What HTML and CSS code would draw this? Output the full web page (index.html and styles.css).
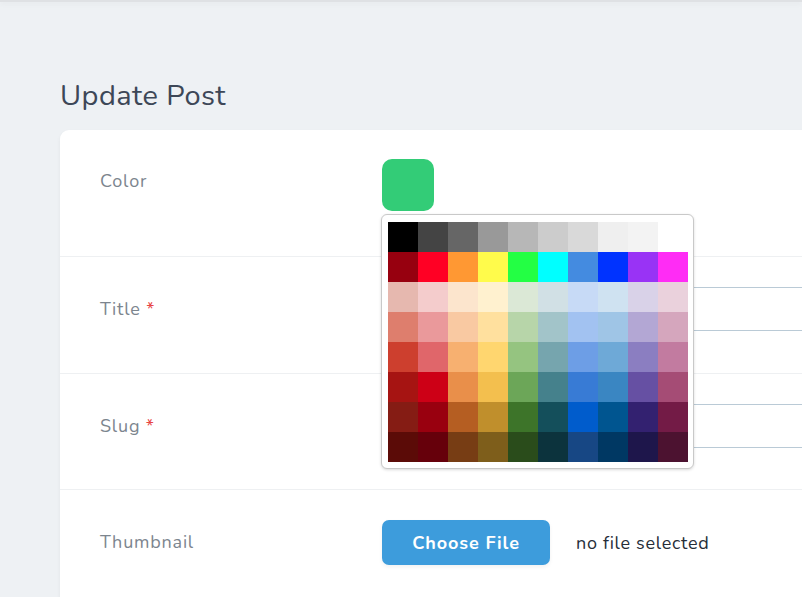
FILE: index.html
```html
<!DOCTYPE html>
<html>
<head>
<meta charset="utf-8">
<title>Update Post</title>
<link rel="stylesheet" href="styles.css">
</head>
<body>
<div class="topbar"></div>
<main class="page">
  <h1 class="heading">Update Post</h1>
  <section class="card">
    <div class="row row-color">
      <div class="label">Color</div>
      <div class="field">
        <div class="swatch"></div>
        <div class="palette">
          <div class="cell" style="background:#000000"></div>
          <div class="cell" style="background:#444444"></div>
          <div class="cell" style="background:#666666"></div>
          <div class="cell" style="background:#999999"></div>
          <div class="cell" style="background:#b7b7b7"></div>
          <div class="cell" style="background:#cccccc"></div>
          <div class="cell" style="background:#d9d9d9"></div>
          <div class="cell" style="background:#efefef"></div>
          <div class="cell" style="background:#f3f3f3"></div>
          <div class="cell" style="background:#ffffff"></div>

          <div class="cell" style="background:#97000f"></div>
          <div class="cell" style="background:#ff0024"></div>
          <div class="cell" style="background:#ff9833"></div>
          <div class="cell" style="background:#fffb4b"></div>
          <div class="cell" style="background:#23ff44"></div>
          <div class="cell" style="background:#00ffff"></div>
          <div class="cell" style="background:#448be0"></div>
          <div class="cell" style="background:#0033ff"></div>
          <div class="cell" style="background:#9933f5"></div>
          <div class="cell" style="background:#ff2cf5"></div>

          <div class="cell" style="background:#e6b8af"></div>
          <div class="cell" style="background:#f4cccc"></div>
          <div class="cell" style="background:#fce5cd"></div>
          <div class="cell" style="background:#fff1cf"></div>
          <div class="cell" style="background:#dbe8d6"></div>
          <div class="cell" style="background:#d1e0e5"></div>
          <div class="cell" style="background:#c7daf6"></div>
          <div class="cell" style="background:#cfe2f1"></div>
          <div class="cell" style="background:#d9d2e8"></div>
          <div class="cell" style="background:#ead1dc"></div>

          <div class="cell" style="background:#de7e6d"></div>
          <div class="cell" style="background:#ea999b"></div>
          <div class="cell" style="background:#f9c9a2"></div>
          <div class="cell" style="background:#ffe09e"></div>
          <div class="cell" style="background:#b7d5a9"></div>
          <div class="cell" style="background:#a2c4c9"></div>
          <div class="cell" style="background:#a2c2f1"></div>
          <div class="cell" style="background:#9fc5e6"></div>
          <div class="cell" style="background:#b3a7d4"></div>
          <div class="cell" style="background:#d5a6bd"></div>

          <div class="cell" style="background:#cd3f2e"></div>
          <div class="cell" style="background:#e0666a"></div>
          <div class="cell" style="background:#f7b070"></div>
          <div class="cell" style="background:#ffd66f"></div>
          <div class="cell" style="background:#95c480"></div>
          <div class="cell" style="background:#76a5ae"></div>
          <div class="cell" style="background:#6d9ee6"></div>
          <div class="cell" style="background:#6ea9d7"></div>
          <div class="cell" style="background:#8b7ec1"></div>
          <div class="cell" style="background:#c27ba0"></div>

          <div class="cell" style="background:#a61412"></div>
          <div class="cell" style="background:#cd0016"></div>
          <div class="cell" style="background:#e98f4a"></div>
          <div class="cell" style="background:#f3bf4e"></div>
          <div class="cell" style="background:#6ca658"></div>
          <div class="cell" style="background:#45818c"></div>
          <div class="cell" style="background:#387bd5"></div>
          <div class="cell" style="background:#3a86c2"></div>
          <div class="cell" style="background:#6650a3"></div>
          <div class="cell" style="background:#a54c75"></div>

          <div class="cell" style="background:#851c14"></div>
          <div class="cell" style="background:#99000f"></div>
          <div class="cell" style="background:#b55e22"></div>
          <div class="cell" style="background:#c08f2c"></div>
          <div class="cell" style="background:#3d7429"></div>
          <div class="cell" style="background:#144f5b"></div>
          <div class="cell" style="background:#005ccc"></div>
          <div class="cell" style="background:#005590"></div>
          <div class="cell" style="background:#332170"></div>
          <div class="cell" style="background:#731b46"></div>

          <div class="cell" style="background:#5b0b07"></div>
          <div class="cell" style="background:#66000b"></div>
          <div class="cell" style="background:#773d14"></div>
          <div class="cell" style="background:#7e5e1b"></div>
          <div class="cell" style="background:#2a4c1b"></div>
          <div class="cell" style="background:#0c333d"></div>
          <div class="cell" style="background:#174784"></div>
          <div class="cell" style="background:#003863"></div>
          <div class="cell" style="background:#1e164b"></div>
          <div class="cell" style="background:#4c1230"></div>
        </div>
      </div>
    </div>
    <div class="row row-title">
      <div class="label">Title <span class="req">*</span></div>
      <div class="field">
        <div class="input"></div>
      </div>
    </div>
    <div class="row row-slug">
      <div class="label">Slug <span class="req">*</span></div>
      <div class="field">
        <div class="input"></div>
      </div>
    </div>
    <div class="row row-thumb">
      <div class="label">Thumbnail</div>
      <div class="field file-field">
        <button class="btn">Choose File</button>
        <span class="file-name">no file selected</span>
      </div>
    </div>
  </section>
</main>
</body>
</html>
```

FILE: styles.css
```css
html, body {
  margin: 0;
  padding: 0;
}

body {
  background: #eef1f4;
  font-family: "Nunito", "Noto Sans", "Open Sans", sans-serif;
  color: #3c4655;
  width: 802px;
  height: 597px;
  overflow: hidden;
}

.topbar {
  height: 2px;
  background: #dfe1e4;
  box-shadow: 0 2px 5px rgba(0, 0, 0, 0.06);
}

.page {
  padding-left: 60px;
}

.heading {
  margin: 0;
  padding-top: 76px;
  height: 36px;
  margin-bottom: 16px;
  font-size: 29px;
  line-height: 36px;
  font-weight: 400;
  letter-spacing: 0.45px;
  color: #3d4757;
}

.card {
  background: #ffffff;
  border-radius: 9px;
  width: 820px;
  height: 600px;
  box-shadow: 0 2px 4px rgba(0, 0, 0, 0.05);
}

.row {
  display: flex;
  align-items: flex-start;
  border-bottom: 1px solid #eef0f2;
}

.row-color {
  height: 126px;
}

.row-title {
  height: 116px;
}

.row-slug {
  height: 115px;
}

.row-thumb {
  border-bottom: none;
}

.label {
  width: 282px;
  padding-left: 40px;
  padding-top: 40px;
  font-size: 18px;
  line-height: 24px;
  letter-spacing: 0.8px;
  color: #7c858e;
}

.row-color .label {
  padding-top: 39px;
}

.req {
  color: #e74444;
}

.field {
  position: relative;
  padding-top: 30px;
  flex: 1;
}

.row-color .field {
  padding-top: 29px;
}

.swatch {
  width: 52px;
  height: 52px;
  border-radius: 10px;
  background: #33cc77;
}

.palette {
  position: absolute;
  left: -1px;
  top: 84px;
  z-index: 5;
  display: grid;
  grid-template-columns: repeat(10, 30px);
  grid-auto-rows: 30px;
  padding: 7px 5px 6px 6px;
  background: #ffffff;
  border: 1px solid #c9c9c9;
  border-radius: 6px;
  box-shadow: 0 1px 3px rgba(0, 0, 0, 0.15);
}

.input {
  height: 42px;
  border: 1px solid #bacad6;
  border-radius: 8px;
  background: #ffffff;
}

.file-field {
  display: flex;
  align-items: center;
  gap: 26px;
}

.btn {
  height: 45px;
  width: 168px;
  border: none;
  border-radius: 7px;
  background: #3d9cdc;
  color: #ffffff;
  font-family: inherit;
  font-size: 18px;
  font-weight: 700;
  letter-spacing: 0.9px;
  box-shadow: 0 2px 4px rgba(0, 0, 0, 0.06);
  padding: 0;
}

.file-name {
  font-size: 18px;
  letter-spacing: 0.7px;
  color: #252d38;
}
```
